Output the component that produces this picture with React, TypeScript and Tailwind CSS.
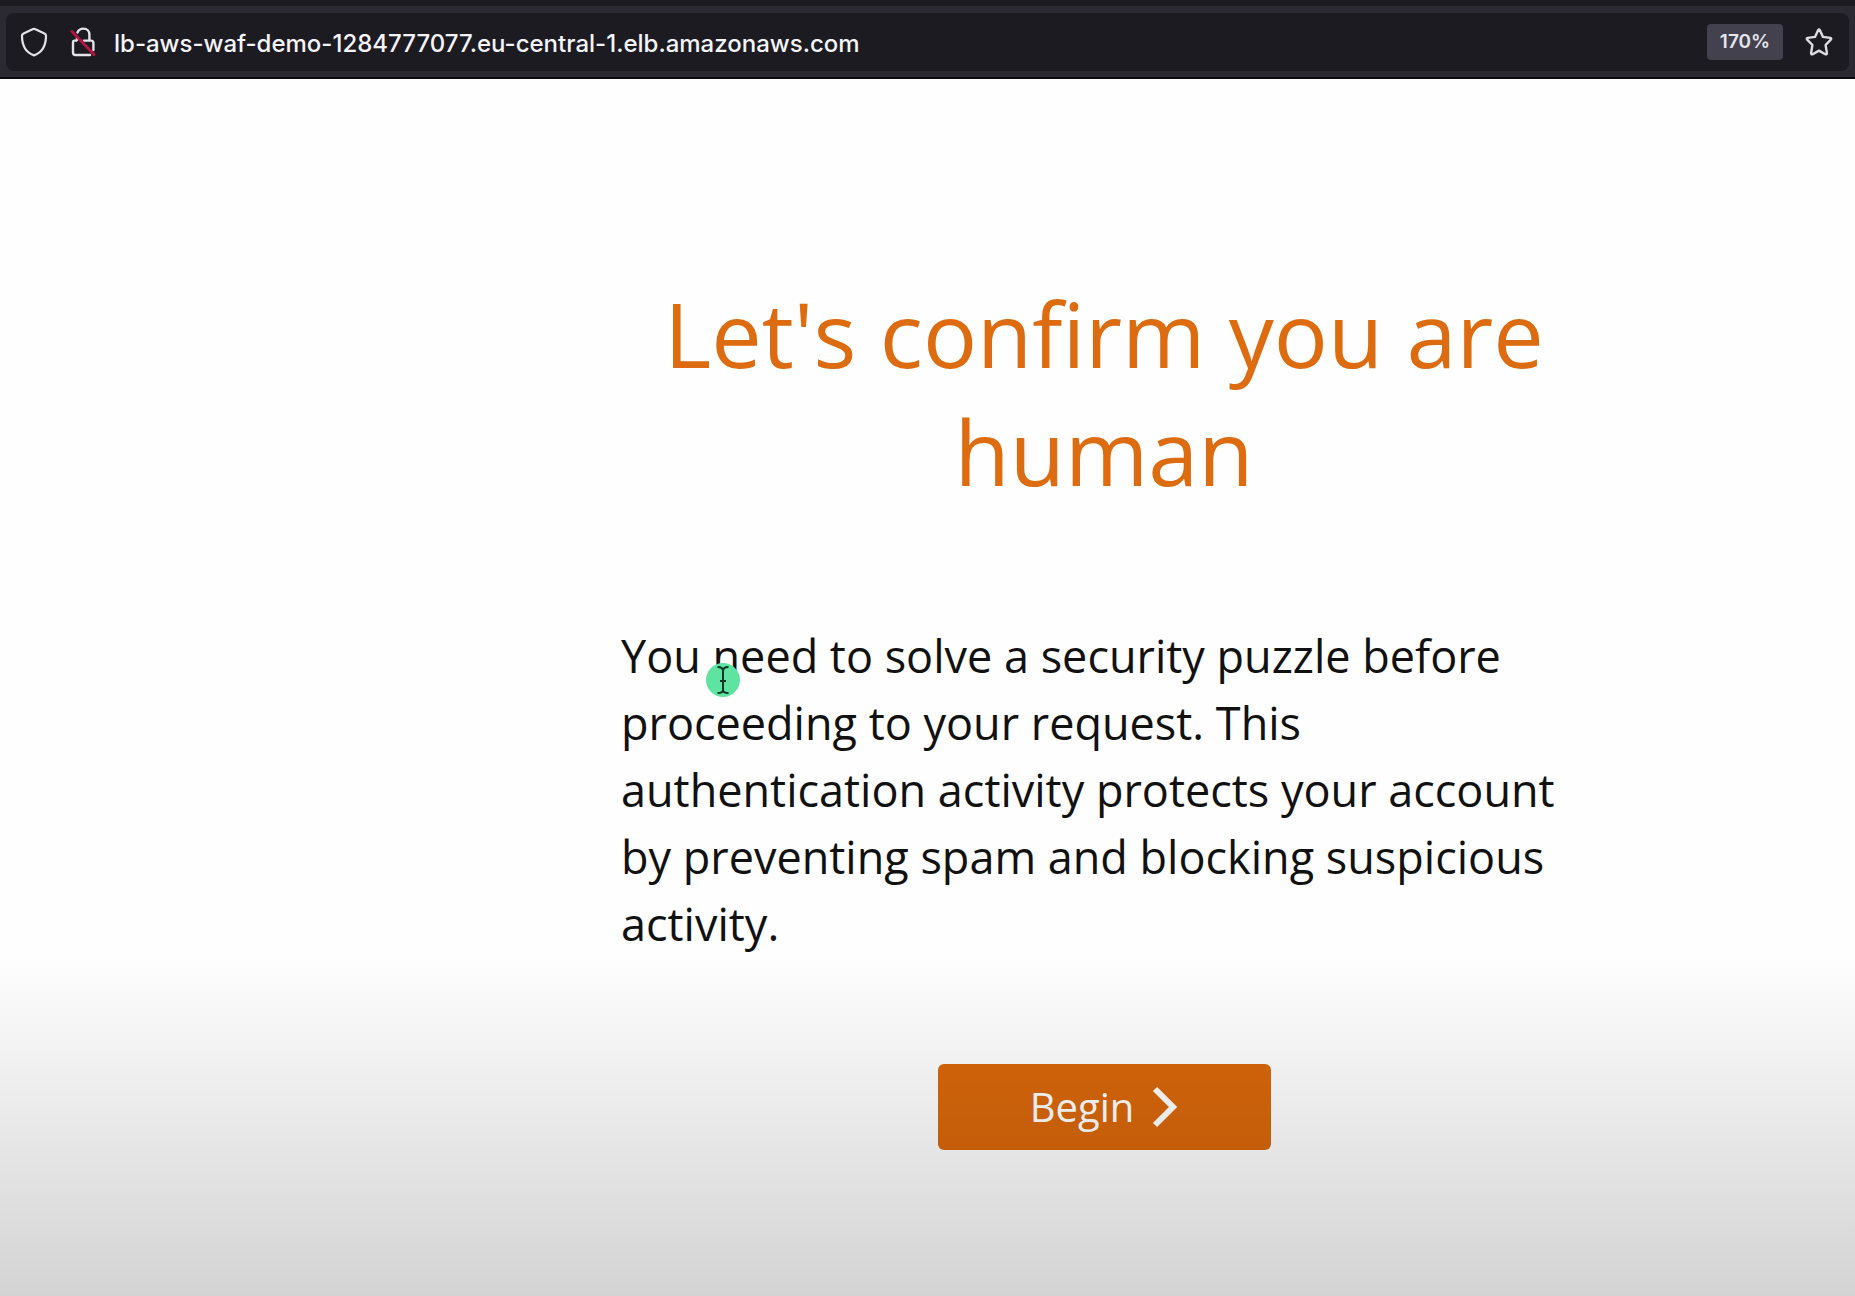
import React from "react";

const ShieldIcon: React.FC = () => (
  <svg viewBox="0 0 28 30" className="h-[30px] w-7" fill="none" stroke="#e4e3ea" strokeWidth="2.2" strokeLinejoin="round">
    <path d="M14 1.8 C14.6 1.8 15 2 15.5 2.3 L24.4 6.5 C25.5 7 26 7.6 26 8.8 C26 17.5 22.5 25.5 14 28.4 C5.5 25.5 2 17.5 2 8.8 C2 7.6 2.5 7 3.6 6.5 L12.5 2.3 C13 2 13.4 1.8 14 1.8 Z" />
  </svg>
);

// Padlock with a red strike, used for plain http sites
const InsecureLockIcon: React.FC = () => (
  <svg viewBox="0 0 26 30" className="h-[30px] w-[26px]" fill="none" strokeWidth="2.4" strokeLinecap="round">
    <path d="M7.5 5.5 C8.5 3 11 1.6 13.5 1.6 C17 1.6 19.4 4.2 19.4 7.5 V13 M7 12.8 V10" stroke="#e4e3ea" />
    <path d="M6.5 13.6 H4.5 Q3 13.6 3 15.5 V25.5 Q3 28 5.5 28 H20 M14 13.6 H21 Q23.4 13.6 23.4 16 V23" stroke="#e4e3ea" />
    <path d="M2 4.5 L24 27.5" stroke="#b3173f" strokeWidth="3" />
  </svg>
);

const StarIcon: React.FC = () => (
  <svg viewBox="0 0 28 28" className="size-7" fill="none" stroke="#dddce3" strokeWidth="2.4" strokeLinejoin="round">
    <path d="M13.1 2.2 Q14 0.9 14.9 2.2 L18 8.9 L25.3 9.9 Q26.9 10.3 25.8 11.6 L20.6 17 L21.9 25 Q21.9 26.9 20.3 26.2 L14 22.6 L7.7 26.2 Q6.1 26.9 6.1 25 L7.4 17 L2.2 11.6 Q1.1 10.3 2.7 9.9 L10 8.9 Z" />
  </svg>
);

const AddressBar: React.FC = () => (
  <header className="border-b-2 border-[#0c0b10] bg-[#2b2a33]">
    <div className="h-1.5 bg-[#1c1b22]" />
    <div className="mx-1.5 mt-[7px] mb-1.5 flex h-[58px] items-center rounded-lg bg-[#1c1b22] pr-4 pl-3.5">
      <ShieldIcon />
      <span className="ml-[22px]">
        <InsecureLockIcon />
      </span>
      <input
        type="text"
        aria-label="Address"
        defaultValue="lb-aws-waf-demo-1284777077.eu-central-1.elb.amazonaws.com"
        className="ml-[18px] h-10 min-w-0 flex-1 bg-transparent pt-0.5 font-['Inter',sans-serif] text-2xl font-medium text-[#f4f4f8] outline-none"
      />
      <button
        type="button"
        className="h-9 w-[76px] rounded-sm bg-[#42414d] font-['Inter',sans-serif] text-[19px] font-semibold text-[#e6e5ec]"
      >
        170%
      </button>
      <button type="button" aria-label="Bookmark this page" className="ml-[22px]">
        <StarIcon />
      </button>
    </div>
  </header>
);

const MousePointer: React.FC = () => (
  <svg viewBox="0 0 36 36" className="absolute top-10 left-[84px] size-9" fill="none">
    <circle cx="18" cy="18" r="17" fill="#5fe3a1" />
    <path
      d="M12.5 5 Q18 5 18 9 V28 Q18 31 12.5 31 M23.5 5 Q18 5 18 9 M18 28 Q18 31 23.5 31 M15 19 H21"
      stroke="#12352a"
      strokeWidth="2"
    />
  </svg>
);

const App: React.FC = () => {
  return (
    <div className="relative flex min-h-screen flex-col bg-[#fefefe] font-['Open_Sans','Noto_Sans',sans-serif]">
      <AddressBar />

      <main className="flex flex-1 flex-col items-center pt-[195px] pl-[353px]">
        <div className="flex w-full max-w-[966px] flex-col items-center">
          <h1 className="text-center text-[90px] leading-[118px] font-normal text-[#dd6b10]">
            Let's confirm you are human
          </h1>

          <p className="relative mt-[112px] w-full text-[45px] leading-[67px] text-[#111111]">
            You need to solve a security puzzle before proceeding to your request. This authentication activity
            protects your account by preventing spam and blocking suspicious activity.
            <MousePointer />
          </p>

          <button
            type="button"
            className="mt-[107px] flex h-[86px] w-[333px] items-center justify-center gap-[18px] rounded-md bg-[#d9670b] text-[40px] text-white"
          >
            Begin
            <svg viewBox="0 0 26 42" className="h-[42px] w-[26px]" fill="none" stroke="currentColor" strokeWidth="6">
              <path d="M3 3 L21 21 L3 39" />
            </svg>
          </button>
        </div>
      </main>

      {/* Shade over the lower part of the page */}
      <div className="pointer-events-none absolute inset-x-0 bottom-0 h-[340px] bg-linear-to-b from-black/0 to-black/17" />
    </div>
  );
};

export default App;
